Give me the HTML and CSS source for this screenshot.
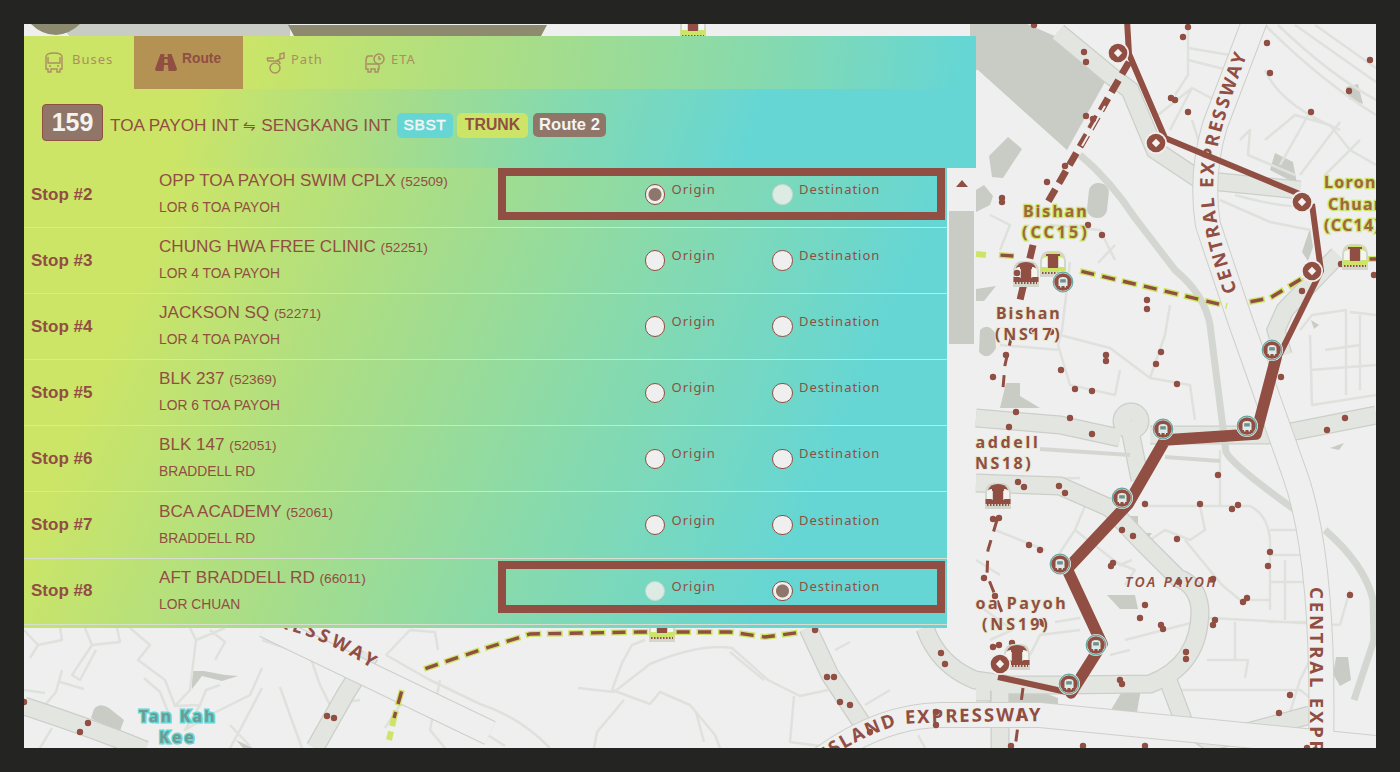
FILE: index.html
```html
<!DOCTYPE html>
<html lang="en">
<head>
<meta charset="utf-8">
<title>Bus route 159</title>
<link rel="stylesheet" href="styles.css">
</head>
<body>
<main class="frame">
<svg class="map" viewBox="24 24 1352 724" width="1352" height="724">
  <defs>
    <g id="dia"><circle r="11" fill="#efefef"/><circle r="9.3" fill="#914e42"/><path d="M0-4.2 4.2 0 0 4.2-4.2 0Z" fill="#f4f2f0"/></g>
    <g id="bus"><circle r="11" fill="#efefef"/><circle r="9.8" fill="none" stroke="#5fa79f" stroke-width="1.2"/><circle r="8.8" fill="#914e42"/><path d="M-4.5 4V-2Q-4.5-5 0-5T4.5-2V4H3V5.5H1.5V4H-1.5V5.5H-3V4Z" fill="#dcebe8"/><path d="M-2.8-2.8H2.8V.5H-2.8Z" fill="#6f8f88"/></g>
    <g id="train"><path d="M-13 13V-3Q-12-13-4-13H4Q12-13 13-3V13Z" fill="#d3d7cb"/><path d="M-10-6Q-8-12 0-12T10-6V-5H-10Z"/><path d="M-7-10H7V-8H5V4H-5V-8H-7Z" fill="#914e42"/><path d="M-11-4Q-10-7-6-7V3H-11ZM6-7Q10-7 11-4V3H6Z" fill="#f4f4f1"/><path d="M-12.500 3H-7L-5 4H5L7 3H12.500V8H-12.500Z"/><path d="M-11 9H11" stroke="#914e42" stroke-width="2" stroke-dasharray="1.500 1.500"/></g>
  </defs>
  <rect x="24" y="24" width="1352" height="724" fill="#efefef"/>
  <g class="park">
    <path d="M60 24H290V37H70ZM970 24H1027L1057 37 1105 82 1067 150 978 70H970Z"/>
    <path d="M1008 137 1022 149 1003 178 992 177 989 156Z"/><rect x="1088" y="183" width="20" height="35" rx="9" transform="rotate(6 1098 200)"/>
    <path d="M976 190 984 185 993 196 990 205 976 212ZM976 289 996 286 984 301H976ZM980 330Q988 322 995 333L996 348Q988 362 979 352ZM1006 383H1020V396L1040 408H1000Z"/>
    <path d="M1346 87 1358 84 1363 104 1349 99ZM1275 153 1293 162 1297 184 1270 170ZM1310 228 1313 247 1308 261 1302 252ZM1311 320 1319 325 1314 329ZM1330 448 1344 443 1339 450Z"/>
    <path d="M1124 516H1138V531ZM1138 533H1152L1146 541ZM1107 595H1135L1138 609H1120ZM1124 688H1141L1137 712 1111 710ZM990 687 1033 689 1058 698V707L988 703ZM1336 657H1348L1351 680 1340 686 1333 674Z"/>
    <path d="M192 671H204L225 675 238 676 222 681 202 676 192 689ZM94 709Q100 702 109 708L124 720 120 731 104 726 91 718ZM236 740 253 748H243Z"/>
  </g>
  <g class="minor">
    <path d="M24 630 38 645 30 658M38 645 62 640 60 627M85 628 92 645 120 642 117 628M92 645 72 675 80 680 96 650M62 670 56 692 45 705M60 682 84 689M130 628 150 645 138 660 165 680 175 706 190 690 196 640 190 628M196 640 225 628M144 678 160 692 168 712M175 706 200 705 185 730 210 715 250 695 262 668M200 705 206 690 220 685M262 688 240 730 230 748M230 725 250 746M280 687 291 718 302 748M262 640 310 656 320 685 330 705 360 700M24 690 45 693M40 748 52 728M210 630 225 642 215 660"/>
    <path d="M480 704Q520 717 550 748M480 730 505 746M612 690 622 663 632 645 645 640M578 688 614 692 650 664Q700 643 732 648L768 680 800 696 828 690M612 690 650 704 660 692 690 705 715 735 720 748M624 700 597 732 594 748M794 696 790 742 820 746M730 652 764 680M696 712 704 742M835 650 850 642M865 705 890 690M386 655 410 630 435 632 438 650M386 655 430 680 480 704M440 680 430 730 445 748M385 728 400 705 420 700M918 735 925 748"/>
    <path d="M1188 28V75L1175 95M1188 48 1230 55M1188 60 1228 70M1158 115 1192 88 1215 100M1192 88 1170 130M1192 120 1200 145M1265 25Q1320 80 1376 115M1278 25Q1330 75 1376 100M1295 25 1376 82M1315 25 1376 68M1265 70Q1280 105 1340 130M1240 140 1250 130 1248 155 1295 175M1265 140 1295 115 1330 125 1350 150 1376 165M1280 165 1310 112M1300 175 1340 122M1325 175 1360 140M1235 195Q1290 210 1310 205M1220 200 1270 222 1310 230M990 215 1010 225 1000 250M1050 225 1100 230 1115 260M1115 245 1098 263M1170 305 1165 335 1150 378M1070 262Q1065 305 1062 330L1058 345 1070 385 1115 395 1120 370M1060 335 1110 348 1150 378 1190 385 1195 420M1000 345 1060 350"/>
    <path d="M1300 330 1312 315 1346 310V395M1310 335 1312 405 1376 395M1325 350 1360 345M1376 315 1350 312M1360 315V390M1310 370 1376 365M1220 505V450M1145 506H1250Q1268 515 1270 540V610M1200 506 1205 530 1190 540 1165 530 1150 540M1185 540 1222 585 1240 600H1270M1270 530H1310V622H1268M1270 555H1308M1285 560V620M1270 582H1308M1085 506 1075 530 1055 560M1075 530 1120 565 1132 560M995 530 1045 550M1000 480 1080 478M1055 622 1080 618M1125 640 1210 618 1340 625M1235 622V660M1207 660 1248 660 1245 678M1110 655 1130 650M1340 625 1350 590M1280 745 1300 680 1310 660"/>
    <path d="M1110 560 1135 570 1125 585M1030 655 1040 635 1080 630M976 560 1000 575M978 605 1010 628M990 640 1012 630M1180 690 1300 690 1320 705"/>
  </g>
  <g class="roadEdge">
    <path d="M24 706Q100 731 145 750M370 655 345 695 315 748M808 628 830 675 865 728M925 628Q938 665 975 680L1010 685H1060L1150 684Q1200 665 1200 610 1198 585 1178 578M976 418 1060 425 1120 438M976 483 1060 486 1110 508 1140 540 1180 580M1130 430 1140 480M1150 435H1275L1376 415M1058 32 1110 75 1130 90 1155 150 1200 180 1300 190M1168 680 1185 725 1210 742 1310 715"/>
    <circle cx="1131" cy="421" r="9"/><path d="M1000 690V748M1283 355 1276 330 1285 310 1338 255M976 692H990"/>
  </g>
  <g class="road">
    <path d="M24 706Q100 731 145 750M370 655 345 695 315 748M808 628 830 675 865 728M925 628Q938 665 975 680L1010 685H1060L1150 684Q1200 665 1200 610 1198 585 1178 578M976 418 1060 425 1120 438M976 483 1060 486 1110 508 1140 540 1180 580M1130 430 1140 480M1150 435H1275L1376 415M1058 32 1110 75 1130 90 1155 150 1200 180 1300 190M1168 680 1185 725 1210 742 1310 715"/>
    <circle cx="1131" cy="421" r="9"/><path d="M1000 690V748M1283 355 1276 330 1285 310 1338 255M976 692H990"/>
  </g>
  <path class="canal" d="M1080 155Q1110 180 1135 218L1175 270Q1205 295 1210 325L1222 420 1226 452Q1232 465 1298 512M1325 530Q1365 565 1373 600L1374 640 1354 700"/>
  <path class="canal narrow" d="M1165 457 1220 461M1040 449 1130 455"/>
  <path class="hwEdge" d="M1255 20 1215 125Q1200 175 1208 225L1240 320 1295 475Q1325 560 1321 750M265 625 490 733M820 760Q880 716 940 715H1040L1376 748"/>
  <path class="hw" d="M1255 20 1215 125Q1200 175 1208 225L1240 320 1295 475Q1325 560 1321 750M265 625 490 733M820 760Q880 716 940 715H1040L1376 748"/>

  <path d="M31 24H80Q70 34 56 35 42 35 31 24ZM288 25H547L541 36H294Z" fill="#8d8a6f"/>
  <path class="mrtY" d="M976 254 986 255M999 255 1014 256M1080 271 1160 290 1227 306M1249 302 1270 298 1306 276M1368 259 1376 259M424 669 480 650 530 634 640 632 730 632 765 637 803 632M402 690 394 718 389 740"/>
  <path class="mrtYcore" d="M999 255 1014 256M1080 271 1160 290 1227 306M1249 302 1270 298 1306 276M1368 259 1376 259M424 669 480 650 530 634 640 632 730 632 765 637 803 632M402 690 394 718"/>
  <path class="mrtB" d="M1129 62 1048 202"/><path d="M1105 106 1082 146" stroke="#efefef" stroke-width="2"/>
  <path class="mrtB" d="M1033 245 1020 300"/>
  <path class="mrtThin" d="M1012 334 1005 365 1003 388M997 520 988 550 987 575 1003 615M1023 688 1015 748"/>

  <path class="dots" d="M1034 25h0M1188 27h0M1183 37h0M1084 52h0M1086 62h0M1267 43h0M1270 73h0M1370 60h0M1171 98h0M1175 100h0M1188 112h0M1349 91h0M1311 112h0M1086 116h0M1093 119h0M1065 166h0M1047 182h0M1002 198h0M1002 202h0M1088 225h0M1102 235h0M1341 264h0M1374 275h0M1302 291h0M1147 300h0M1147 309h0M1161 352h0M1156 364h0M1106 355h0M1106 361h0M1061 370h0M1006 355h0M993 377h0M1075 389h0M1092 391h0M1177 384h0M1281 377h0M1345 418h0M1327 430h0M1016 412h0M1009 427h0M1070 418h0M1092 434h0M1218 475h0M1018 482h0M1024 487h0M1059 486h0M1065 493h0M1145 504h0M1200 504h0M1238 505h0M1232 509h0M993 519h0M999 518h0M1029 545h0M1040 550h0M1122 530h0M1133 536h0M1177 539h0M1270 552h0M1268 566h0M1113 563h0M1111 566h0M984 578h0M995 596h0M1179 582h0M1213 579h0M1247 598h0M1243 602h0M1350 595h0M1145 605h0M1140 618h0M1161 625h0M1163 629h0M1215 620h0M1213 625h0M1040 622h0M1044 624h0M993 647h0M999 645h0M1012 643h0M1186 652h0M1186 659h0M1120 680h0M1122 684h0M1290 695h0M1279 713h0M815 630h0M827 677h0M834 677h0M840 702h0M850 705h0M936 712h0M936 725h0M870 732h0M941 653h0M945 664h0M327 716h0M334 718h0M88 723h0M80 732h0M24 702h0M1011 746h0M1083 746h0M1145 746h0M1307 748h0"/>

  <use href="#train" x="1026" y="274" fill="#914e42"/><use href="#train" x="1053" y="264" fill="#cce566"/><use href="#train" x="1355" y="257" fill="#cce566"/><use href="#train" x="998" y="496" fill="#914e42"/><use href="#train" x="1017" y="657" fill="#914e42"/><use href="#train" x="693" y="27" fill="#cce566"/><use href="#train" x="662" y="629" fill="#cce566"/>
  <path d="M1017 273h0M1024 275h0M1032 331h0M1051 332h0" class="dots"/>

  <g class="mapLabel">
    <g class="haloY"><text x="1023" y="217" textLength="65">Bishan</text><text x="1022" y="238" textLength="66">(CC15)</text><text x="1324" y="188">Lorong</text><text x="1328" y="210">Chuan</text><text x="1324" y="231">(CC14)</text></g>
    <g class="haloN"><text x="996" y="319" textLength="65">Bishan</text><text x="995" y="340" textLength="66">(NS17)</text><text x="966" y="448" textLength="73">raddell</text><text x="967" y="469" textLength="65">(NS18)</text><text x="965" y="609" textLength="102">Toa Payoh</text><text x="982" y="630" textLength="67">(NS19)</text></g>
    <g class="haloC"><text x="139" y="722" textLength="77">Tan Kah</text><text x="159" y="743" textLength="36">Kee</text></g>
    <text class="district" x="1125" y="587" textLength="92">TOA PAYOH</text>
  </g>
  <path id="e1" d="M1237 291Q1222 250 1216 215 1210 180 1218 145 1224 115 1247 55" fill="none"/>
  <path id="e2" d="M1310 587V850" fill="none"/>
  <path id="e3" d="M232 618Q290 628 320 641T372 669" fill="none"/>
  <path id="e4" d="M826 761Q858 737 902 724 930 722 1045 721" fill="none"/>
  <g class="express"><text><textPath href="#e1" textLength="244">CENTRAL EXPRESSWAY</textPath></text><text><textPath href="#e2" textLength="254">CENTRAL EXPRESSWAY</textPath></text><text><textPath href="#e3" textLength="149">EXPRESSWAY</textPath></text><text><textPath href="#e4" textLength="224">ISLAND EXPRESSWAY</textPath></text></g>

  <path class="routeThin" d="M1127 20 1129 54 1165 138 1302 195M1312 204 1321 271 1276 362M1071 693 998 677"/>
  <path class="route" d="M1276 358 1256 434 1165 440 1128 504 1067 569 1102 644 1071 693"/>
  <use href="#dia" x="1118" y="53"/><use href="#dia" x="1156" y="143"/><use href="#dia" x="1302" y="202"/><use href="#dia" x="1312" y="271"/><use href="#dia" x="1000" y="664"/>
  <use href="#bus" x="1272" y="350"/><use href="#bus" x="1247" y="426"/><use href="#bus" x="1163" y="429"/><use href="#bus" x="1122" y="498"/><use href="#bus" x="1060" y="564"/><use href="#bus" x="1096" y="645"/><use href="#bus" x="1069" y="684"/><use href="#bus" x="1063" y="282"/>
</svg>

<section class="panel">
  <nav class="tabs">
    <a class="tab tabBuses"><svg width="18" height="21" viewBox="0 0 18 21"><path d="M1 17V5Q1 1 9 1T17 5V17H15V20H12V17H6V20H3V17ZM3 5V11H15V5M4 14H6M12 14H14" fill="none" stroke="currentColor" stroke-width="1.4"/></svg><span>Buses</span></a>
    <a class="tab tabRoute"><svg width="22" height="17" viewBox="0 0 22 17"><path d="M5.500 0H9.500L9 3H13L12.500 0H16.500L22 15Q22 17 20 17H13.500L13 11H9L8.500 17H2Q0 17 0 15ZM9.500 5 9.200 9H12.800L12.500 5Z" fill="currentColor" fill-rule="evenodd"/></svg><span>Route</span></a>
    <a class="tab tabPath"><svg width="20" height="22" viewBox="0 0 20 22"><path d="M1 6H8M1 6 2 9H11Q14 9 14 12M10 9 14 7V2L18 1V6L14 7" fill="none" stroke="currentColor" stroke-width="1.500"/><circle cx="9" cy="16" r="5" fill="none" stroke="currentColor" stroke-width="1.500"/></svg><span>Path</span></a>
    <a class="tab tabEta"><svg width="20" height="20" viewBox="0 0 20 20"><circle cx="14" cy="6" r="5" fill="none" stroke="currentColor" stroke-width="1.500"/><path d="M14 3V6H16M8 3H3Q1 4 1 8V16H3V19H6V16H10V19H13V16H14V12M2 11H14" fill="none" stroke="currentColor" stroke-width="1.500"/></svg><span>ETA</span></a>
  </nav>
  <header class="service">
    <span class="number">159</span>
    <span class="title">TOA PAYOH INT <i>⇋</i> SENGKANG INT</span>
    <span class="badge sbst">SBST</span><span class="badge trunk">TRUNK</span><span class="badge variant">Route 2</span>
  </header>
  <div class="body">
    <div class="list">
      <div class="row first"><b>Stop #2</b><div class="stop"><p>OPP TOA PAYOH SWIM CPLX <small>(52509)</small></p><p class="street">LOR 6 TOA PAYOH</p></div><label><i class="radio on"></i><span>Origin</span></label><label><i class="radio off"></i><span>Destination</span></label></div>
      <div class="row"><b>Stop #3</b><div class="stop"><p>CHUNG HWA FREE CLINIC <small>(52251)</small></p><p class="street">LOR 4 TOA PAYOH</p></div><label><i class="radio"></i><span>Origin</span></label><label><i class="radio"></i><span>Destination</span></label></div>
      <div class="row"><b>Stop #4</b><div class="stop"><p>JACKSON SQ <small>(52271)</small></p><p class="street">LOR 4 TOA PAYOH</p></div><label><i class="radio"></i><span>Origin</span></label><label><i class="radio"></i><span>Destination</span></label></div>
      <div class="row"><b>Stop #5</b><div class="stop"><p>BLK 237 <small>(52369)</small></p><p class="street">LOR 6 TOA PAYOH</p></div><label><i class="radio"></i><span>Origin</span></label><label><i class="radio"></i><span>Destination</span></label></div>
      <div class="row"><b>Stop #6</b><div class="stop"><p>BLK 147 <small>(52051)</small></p><p class="street">BRADDELL RD</p></div><label><i class="radio"></i><span>Origin</span></label><label><i class="radio"></i><span>Destination</span></label></div>
      <div class="row"><b>Stop #7</b><div class="stop"><p>BCA ACADEMY <small>(52061)</small></p><p class="street">BRADDELL RD</p></div><label><i class="radio"></i><span>Origin</span></label><label><i class="radio"></i><span>Destination</span></label></div>
      <div class="row last"><b>Stop #8</b><div class="stop"><p>AFT BRADDELL RD <small>(66011)</small></p><p class="street">LOR CHUAN</p></div><label><i class="radio off"></i><span>Origin</span></label><label><i class="radio on"></i><span>Destination</span></label></div>
    </div>
    <div class="scroll"><div class="arrow"></div><div class="thumb"></div></div>
  </div>
</section>
</main>
</body>
</html>
```
FILE: styles.css
```css
*, *::after { box-sizing: border-box; }
body { margin: 0; padding: 24px; width: 1400px; height: 772px; background: #242422; font-family: "Liberation Sans", Arial, sans-serif; color: #914e42; overflow: hidden; }
.frame { position: relative; width: 1352px; height: 724px; overflow: hidden; }
.map { display: block; }
.park { fill: #c8ccc4; }
.minor { fill: none; stroke: #dfe1dd; stroke-width: 2.5; stroke-linejoin: round; }
.roadEdge { fill: none; stroke: #cbcfc8; stroke-width: 19; }
.road { fill: none; stroke: #e3e5e1; stroke-width: 16.5; }
.canal { fill: none; stroke: #d4d7d1; stroke-width: 7; }
.canal.narrow { stroke-width: 4; }
.hwEdge { fill: none; stroke: #ccd0c9; stroke-width: 26; }
.hw { fill: none; stroke: #efefef; stroke-width: 24; }
.mrtY { fill: none; stroke: #cce566; stroke-width: 6; stroke-dasharray: 16 5.4; }
.mrtYcore { fill: none; stroke: #914e42; stroke-width: 3.4; stroke-dasharray: 13 8.4; stroke-dashoffset: -1.5; }
.mrtB { fill: none; stroke: #914e42; stroke-width: 7; stroke-dasharray: 14 7; }
.mrtThin { fill: none; stroke: #914e42; stroke-width: 3; stroke-dasharray: 12 9; }
.dots { fill: none; stroke: #914e42; stroke-width: 6.4; stroke-linecap: round; }
.mapLabel { font: 700 16px "Noto Sans", sans-serif; letter-spacing: 1.3px; fill: #914e42; }
.mapLabel text { paint-order: stroke; }
.haloY { stroke: #cce566; stroke-width: 2.5px; fill: #a1663f; }
.haloN { stroke: #e6e9cb; stroke-width: 2px; }
.haloC { stroke: #66d6d4; stroke-width: 3px; fill: #6f9a92; }
.mapLabel .district { font-size: 14px; font-weight: 600; font-style: italic; letter-spacing: 1px; }
.express { font: 700 18.5px "Noto Sans", sans-serif; fill: #914e42; }
.routeThin { fill: none; stroke: #914e42; stroke-width: 6; stroke-linejoin: round; }
.route { fill: none; stroke: #914e42; stroke-width: 11.5; stroke-linejoin: round; stroke-linecap: round; }

.panel { position: absolute; left: 0; top: 12px; width: 952px; display: flex; flex-direction: column; }
.tabs { display: flex; height: 53px; background: linear-gradient(98deg, #cce566 22%, #a8dd88 52%, #88daac 76%, #66d6d4 98%); }
.tab { display: flex; align-items: center; font: 13px "Noto Sans", sans-serif; letter-spacing: 1px; color: #ab8e62; }
.tab span { padding-bottom: 8px; }
.tab svg { flex: none; }
.tabBuses { width: 110px; padding-left: 21px; gap: 9px; }
.tabRoute { width: 109px; padding-left: 21px; gap: 5px; background: #b39254; color: #914e42; font: bold 13.8px "Liberation Sans", sans-serif; letter-spacing: 0; }
.tabPath { width: 98px; padding-left: 23px; gap: 5px; }
.tabEta { padding-left: 24px; gap: 6px; }
.service { display: flex; align-items: center; height: 79px; padding: 0 0 11px 18px; background: linear-gradient(108deg, #cce566 17%, #a8dd88 38%, #88daac 54%, #66d6d4 76%); }
.number { width: 61px; height: 37px; margin-top: -1px; border-radius: 4px; border: 1px solid #914e42; background: #8f7668; color: #f5f3f0; font: bold 25px/34px "Liberation Sans", sans-serif; text-align: center; }
.title { font-size: 17.2px; width: 294px; padding: 4px 0 0 7px; white-space: nowrap; }
.title i { font-style: normal; font-size: 15px; }
.badge { height: 25px; margin-top: 4px; border-radius: 5px; font: bold 16px/24px "Liberation Sans", sans-serif; text-align: center; color: #f4f4f2; white-space: nowrap; }
.sbst { width: 56px; background: #66d6d4; font-weight: normal; font-size: 15.5px; letter-spacing: .6px; -webkit-text-stroke: .5px #f4f4f2; }
.trunk { width: 71px; margin-left: 4px; background: #cce566; color: #914e42; font-size: 15.8px; }
.variant { width: 73px; margin-left: 5px; height: 24px; background: #8f7668; font-size: 16.6px; }
.body { display: flex; height: 460px; }
.list { width: 923px; overflow: hidden; background: linear-gradient(113deg, #cce566 14%, #a8dd88 38%, #88daac 59%, #66d6d4 83%); }
.row { position: relative; display: grid; grid-template-columns: 128px 485.5px 127.5px 1fr; align-items: center; height: 66.1px; padding-left: 7px; border-bottom: 1.5px solid #d9dfd0; }
.first { margin-top: -6px; }
.row b { font-size: 17px; }
.row p { margin: 0; font-size: 17.1px; line-height: 26px; white-space: nowrap; }
.row small { font-size: 13.7px; }
.row p.street { font-size: 13.8px; }
.row label { display: flex; align-items: center; gap: 6.5px; }
.row label span { font: 13px/20px "Noto Sans", sans-serif; letter-spacing: 1px; padding-bottom: 11px; }
.radio { flex: none; width: 20.5px; height: 20.5px; border-radius: 50%; border: 1px solid #914e42; background: #efefef; }
.radio.on { background: radial-gradient(circle, #8e776a 0 6px, #efefef 7px); }
.radio.off { border-color: #c8d8ce; background: #dcebe4; }
.first::after, .last::after { content: ""; position: absolute; left: 474px; top: 6px; width: 447px; height: 52px; border: 8px solid #914e42; }
.last::after { top: 2px; }
.scroll { width: 28px; background: #efefef; padding: 12px 1px 0 2px; }
.arrow { width: 0; height: 0; margin: 0 auto 24px; border: 6px solid transparent; border-top: 0; border-bottom: 7px solid #914e42; }
.thumb { height: 133px; background: #c8ccc4; }
```
